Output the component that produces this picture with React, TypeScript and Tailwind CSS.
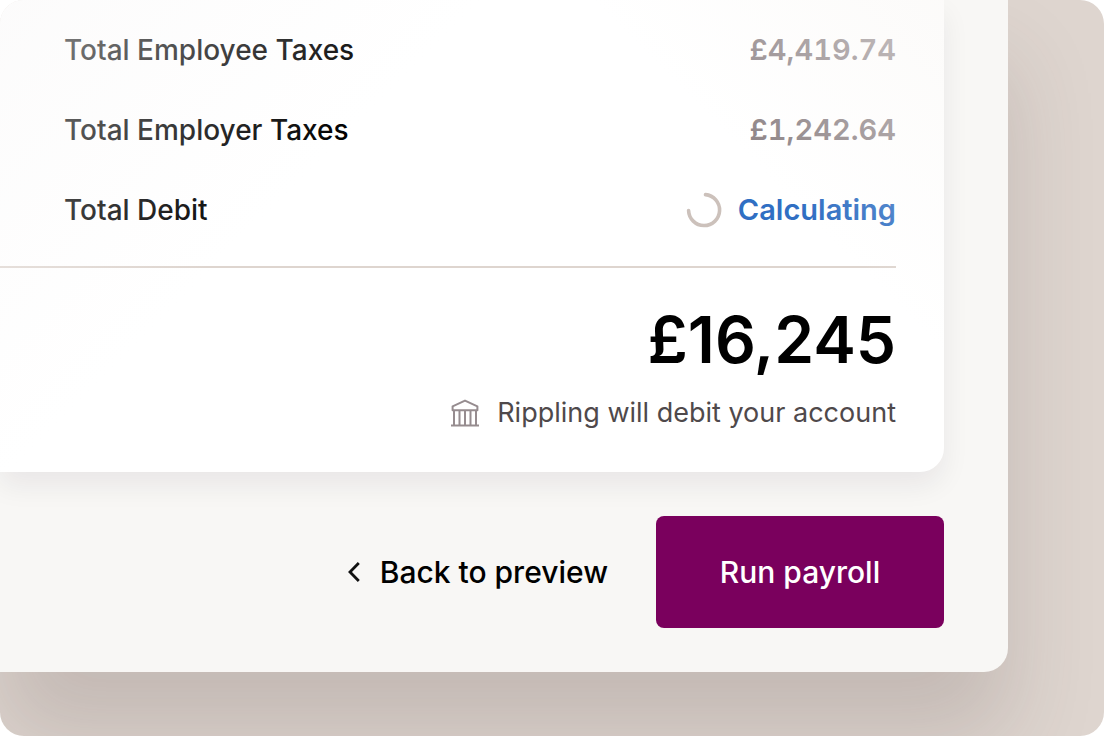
import React from 'react';

interface SummaryRowProps {
  label: string;
  children: React.ReactNode;
}

function SummaryRow({ label, children }: SummaryRowProps) {
  return (
    <div className="flex h-20 items-center justify-between">
      <dt className="text-[28px] font-medium text-black">{label}</dt>
      <dd className="flex items-center text-[29px] font-semibold text-[#8c8285] tabular-nums">{children}</dd>
    </div>
  );
}

function Spinner() {
  return (
    <svg className="mr-4 h-9 w-9" viewBox="0 0 36 36" fill="none" aria-hidden="true">
      <path
        d="M19.5 2.6A15.5 15.5 0 1 1 2.6 18.5"
        stroke="#ccc1bb"
        strokeWidth="3.6"
        strokeLinecap="round"
      />
    </svg>
  );
}

function BankIcon() {
  return (
    <svg className="h-7 w-7" viewBox="0 0 28 28" fill="none" stroke="#968c8f" strokeWidth="2" aria-hidden="true">
      <path d="M1.6 11.3V7.3L14 1.6l12.4 5.7v4z" strokeLinejoin="round" />
      <path d="M3 11v15M8.5 11v15M14 11v15M19.5 11v15M25 11v15" />
      <path d="M0 26.5h28" />
    </svg>
  );
}

function BackIcon() {
  return (
    <svg className="h-5 w-3" viewBox="0 0 12 20" fill="none" aria-hidden="true">
      <path d="M10.8 1L2 10l8.800 9" stroke="#111" strokeWidth="2.8" />
    </svg>
  );
}

export default function App() {
  return (
    <main className="min-h-screen overflow-hidden rounded-3xl bg-[#ded5cf] pr-24 pb-16 font-['Inter','Liberation_Sans',sans-serif]">
      <div className="rounded-br-3xl bg-[#f8f7f5] pr-16 shadow-[0_64px_88px_rgba(80,62,62,0.18)]">
        <section className="relative rounded-br-3xl bg-white pt-2.5 pr-12 pb-[39px] shadow-[0_14px_28px_rgba(30,10,50,0.065)]">
          <dl className="pl-16">
            <SummaryRow label="Total Employee Taxes">£4,419.74</SummaryRow>
            <SummaryRow label="Total Employer Taxes">£1,242.64</SummaryRow>
            <SummaryRow label="Total Debit">
              <Spinner />
              <span className="text-[#306fc3]">Calculating</span>
            </SummaryRow>
          </dl>
          <hr className="mt-4 border-t-2 border-[#ded5cf]" />
          <p className="mt-8 text-right text-[64px] leading-20 font-semibold text-black">£16,245</p>
          <p className="mt-[13px] flex h-10 items-center justify-end gap-[18px] text-[27px] text-[#4f494b]">
            <BankIcon />
            Rippling will debit your account
          </p>
          {/* soft fade in the two top corners */}
          <div className="pointer-events-none absolute inset-0 bg-[linear-gradient(135deg,rgba(250,249,249,0.6),rgba(250,249,249,0)_340px),linear-gradient(225deg,rgba(250,248,246,0.6),rgba(250,248,246,0)_250px)]" />
        </section>
        <footer className="flex items-center justify-end gap-12 py-11 text-[30px] font-medium">
          <button type="button" className="flex items-center gap-5 text-black">
            <BackIcon />
            Back to preview
          </button>
          <button type="button" className="h-28 w-72 rounded-lg bg-[#7a005d] text-white">
            Run payroll
          </button>
        </footer>
      </div>
    </main>
  );
}
